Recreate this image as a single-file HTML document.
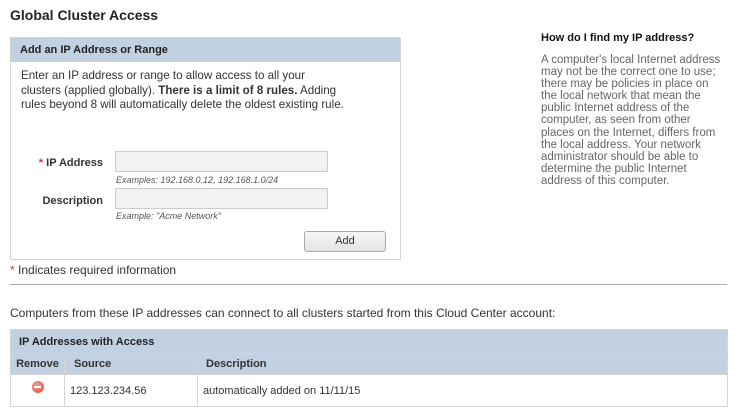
<!DOCTYPE html>
<html><head><style>
*{margin:0;padding:0;box-sizing:border-box}
body{width:738px;height:417px;background:#fff;font-family:"Liberation Sans",Arial,sans-serif;color:#333;position:relative;overflow:hidden}
.a{position:absolute;white-space:nowrap}
h1{position:absolute;left:10px;top:7px;font-size:14px;font-weight:bold;color:#222}
.panel{position:absolute;left:10px;top:37px;width:391px;height:223px;border:1px solid #d4d4d4}
.ph{background:#c1d1e1;height:24px;font-size:11px;font-weight:bold;padding:6px 0 0 9px;color:#222}
.inp{position:absolute;background:#f2f2f2;border:1px solid #ccc;width:213px;height:21px}
.lbl{position:absolute;font-size:11px;font-weight:bold;color:#333;text-align:right;width:92px}
.ex{position:absolute;font-size:9px;font-style:italic;color:#555}
.btn{position:absolute;left:293px;top:193px;width:82px;height:21px;border:1px solid #aaa;border-radius:3px;background:linear-gradient(#f6f6f6,#e4e4e4);font-size:11px;text-align:center;line-height:19px;color:#333}
table{position:absolute;left:10px;top:329px;width:718px;border-collapse:collapse;font-size:11px}
td,th{border:1px solid #d4d4d4;text-align:left}
.side{position:absolute;left:541px;top:32px;white-space:nowrap}
</style></head><body>
<h1>Global Cluster Access</h1>
<div class="panel">
<div class="ph">Add an IP Address or Range</div>
<div class="a" style="left:10px;top:31px;font-size:11.6px;line-height:14.5px;color:#333">Enter an IP address or range to allow access to all your<br>clusters (applied globally). <b>There is a limit of 8 rules.</b> Adding<br>rules beyond 8 will automatically delete the oldest existing rule.</div>
<div class="lbl" style="left:0;top:119px"><span style="color:#d33">*</span> IP Address</div>
<div class="inp" style="left:104px;top:113px"></div>
<div class="ex" style="left:105px;top:137px">Examples: 192.168.0.12, 192.168.1.0/24</div>
<div class="lbl" style="left:0;top:157px">Description</div>
<div class="inp" style="left:104px;top:150px"></div>
<div class="ex" style="left:105px;top:173px">Example: "Acme Network"</div>
<div class="btn">Add</div>
</div>
<div class="a" style="left:10px;top:263px;font-size:12px"><span style="color:#d33">*</span> Indicates required information</div>
<div class="a" style="left:10px;top:284px;width:717px;height:1px;background:#aaa"></div>
<div class="a" style="left:10px;top:306px;font-size:12px">Computers from these IP addresses can connect to all clusters started from this Cloud Center account:</div>
<table>
<tr style="background:#c1d1e1;height:24px"><th colspan="3" style="padding-left:8px;font-weight:bold;color:#222">IP Addresses with Access</th></tr>
<tr style="background:#c1d1e1;height:21px"><th style="width:54px;text-align:center">Remove</th><th style="width:133px;padding-left:9px">Source</th><th style="padding-left:8px">Description</th></tr>
<tr style="height:32px"><td style="text-align:center;vertical-align:top;padding-top:6px"><span style="display:inline-block;width:12px;height:12px;border-radius:50%;background:radial-gradient(circle at 40% 35%,#f6a090,#d9473a);position:relative"><span style="position:absolute;left:2.5px;top:5.2px;width:7px;height:1.6px;background:#fff"></span></span></td><td style="padding-left:5px">123.123.234.56</td><td style="padding-left:5px">automatically added on 11/11/15</td></tr>
</table>
<div class="side">
<div style="font-size:11px;font-weight:bold;color:#111">How do I find my IP address?</div>
<div style="font-size:11.5px;line-height:12.1px;color:#666;margin-top:10px">A computer's local Internet address<br>may not be the correct one to use;<br>there may be policies in place on<br>the local network that mean the<br>public Internet address of the<br>computer, as seen from other<br>places on the Internet, differs from<br>the local address. Your network<br>administrator should be able to<br>determine the public Internet<br>address of this computer.</div>
</div>
</body></html>
